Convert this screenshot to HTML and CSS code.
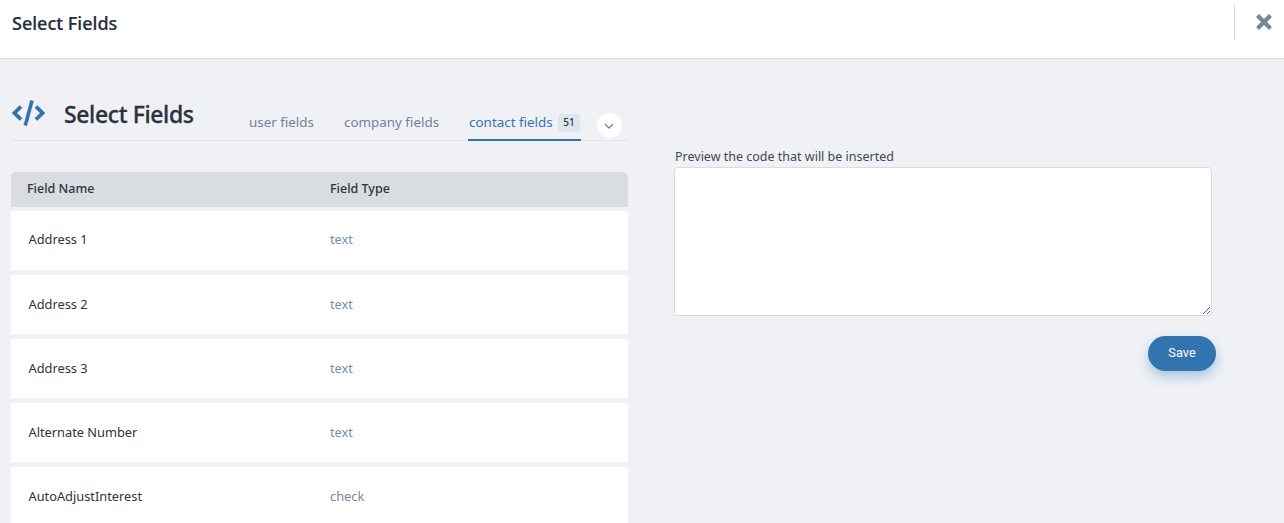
FILE: index.html
```html
<!DOCTYPE html>
<html lang="en">
<head>
<meta charset="utf-8">
<title>Select Fields</title>
<link rel="stylesheet" href="styles.css">
</head>
<body>
<header class="topbar">
  <h1 class="topbar-title">Select Fields</h1>
  <div class="close-wrap">
    <svg class="close-icon" viewBox="0 0 18 18" width="18" height="18" aria-hidden="true"><path d="M2.5 2.5 15.5 15.5M15.5 2.5 2.5 15.5" fill="none" stroke="#74849a" stroke-width="4.2"/></svg>
  </div>
</header>
<main class="content">
  <section class="left">
    <div class="tabs-head">
      <div class="title-group">
        <svg class="code-icon" viewBox="0 0 33 26" width="33" height="26" aria-hidden="true">
          <path d="M9 6.5 2.5 13 9 19.5M24 6.5 30.5 13 24 19.5" fill="none" stroke="#3274b0" stroke-width="3.8"/>
          <path d="M20 0.5 13.3 25.5" fill="none" stroke="#3274b0" stroke-width="3.6"/>
        </svg>
        <h2 class="section-title">Select Fields</h2>
      </div>
      <nav class="tabs">
        <a class="tab">user fields</a>
        <a class="tab">company fields</a>
        <a class="tab active">contact fields <span class="badge">51</span></a>
      </nav>
      <button class="more" type="button" aria-label="More">
        <svg viewBox="0 0 10 6" width="10" height="6" aria-hidden="true"><path d="M1 1l4 4 4-4" fill="none" stroke="#74849a" stroke-width="1.3"/></svg>
      </button>
    </div>
    <div class="table-head">
      <div class="col-name">Field Name</div>
      <div class="col-type">Field Type</div>
    </div>
    <div class="row"><div class="cell-name">Address 1</div><div class="cell-type link">text</div></div>
    <div class="row"><div class="cell-name">Address 2</div><div class="cell-type link">text</div></div>
    <div class="row"><div class="cell-name">Address 3</div><div class="cell-type link">text</div></div>
    <div class="row"><div class="cell-name">Alternate Number</div><div class="cell-type link">text</div></div>
    <div class="row"><div class="cell-name">AutoAdjustInterest</div><div class="cell-type muted">check</div></div>
  </section>
  <section class="right">
    <label class="preview-label" for="preview">Preview the code that will be inserted</label>
    <textarea class="preview" id="preview"></textarea>
    <div class="actions"><button class="save" type="button">Save</button></div>
  </section>
</main>
</body>
</html>
```
FILE: styles.css
```css
* { box-sizing: border-box; }
html, body { margin: 0; height: 100%; overflow: hidden; }
body {
  background: #eff1f5;
  font-family: "Noto Sans", "Open Sans", sans-serif;
  color: #2d3440;
  font-size: 12.5px;
}
.topbar {
  height: 59px;
  background: #fff;
  border-bottom: 1px solid #d8dbe0;
  display: flex;
  align-items: flex-start;
  justify-content: space-between;
  padding: 4px 0 0 12px;
}
.topbar-title { margin: 7px 0 0; font-size: 18px; line-height: 24px; font-weight: 500; color: #272d36; -webkit-text-stroke: 0.2px #272d36; }
.close-wrap {
  height: 36px;
  width: 50px;
  padding-left: 20px;
  border-left: 1px solid #d8dbe0;
  display: flex;
  align-items: center;
}
.close-icon { display: block; }
.content { display: flex; padding: 0 0 0 11px; }
.left { width: 617px; flex: none; }
.tabs-head {
  height: 82px;
  border-bottom: 1px solid #e3e5ea;
  display: flex;
  align-items: flex-end;
}
.title-group { display: flex; align-items: center; width: 237px; padding-left: 1px; height: 52px; }
.section-title { margin: 0 0 0 19px; font-size: 23px; font-weight: 500; color: #2c323d; letter-spacing: -0.38px; -webkit-text-stroke: 0.3px #2c323d; }
.code-icon { display: block; margin-top: -2px; flex: none; }
.tabs { display: flex; gap: 28px; align-items: flex-end; }
.tab { color: #74809a; font-size: 13.4px; height: 28px; line-height: 20px; padding: 0 1px; white-space: nowrap; }
.tab.active { color: #3274b0; border-bottom: 2px solid #3274b0; height: 29px; margin-bottom: -1px; padding: 0 1px; }
.badge {
  display: inline-block;
  background: #dde5ef;
  color: #2d3440;
  font-size: 10px;
  font-weight: 500;
  line-height: 15px;
  height: 18px;
  padding: 1px 5px;
  border-radius: 3px;
  margin-left: 2px;
  vertical-align: 1px;
}
.more {
  width: 25px;
  height: 25px;
  border: 0;
  padding: 0;
  border-radius: 50%;
  background: #fff;
  margin: 0 0 2px 16px;
  display: flex;
  align-items: center;
  justify-content: center;
}
.table-head {
  margin-top: 31px;
  height: 35px;
  background: #d9dce1;
  border-radius: 5px 5px 0 0;
  display: flex;
  align-items: center;
  font-weight: 500;
  color: #2d3440;
  margin-bottom: 4px;
  padding-bottom: 2px;
}
.col-name { width: 319px; padding-left: 16px; }
.col-type { flex: 1; }
.row {
  height: 59px;
  background: #fff;
  display: flex;
  align-items: center;
  margin-bottom: 5px;
  padding-bottom: 1px;
  font-size: 12.8px;
}
.table-head + .row { padding-bottom: 3px; }
.cell-name { width: 319px; padding-left: 17.5px; color: #2d3440; }
.cell-type { flex: 1; }
.link { color: #7390ad; }
.muted { color: #7a86a0; }
.right { width: 542px; margin-left: 46px; padding-top: 90px; flex: none; }
.preview-label { display: block; height: 18px; line-height: 15px; padding-left: 1px; color: #3f4753; font-size: 12.5px; }
.preview {
  display: block;
  width: 538px;
  height: 149px;
  background: #fff;
  border: 1px solid #d8dbe0;
  border-radius: 4px;
  margin: 0;
}
.actions { display: flex; justify-content: flex-end; margin-top: 20px; }
.save {
  width: 68px;
  height: 35px;
  border: 0;
  border-radius: 18px;
  background: #3274b0;
  color: #fff;
  font-family: "Roboto", sans-serif;
  font-size: 12.8px;
  padding: 0 0 2px;
  box-shadow: 0 6px 12px rgba(50, 116, 176, 0.35);
}
```
